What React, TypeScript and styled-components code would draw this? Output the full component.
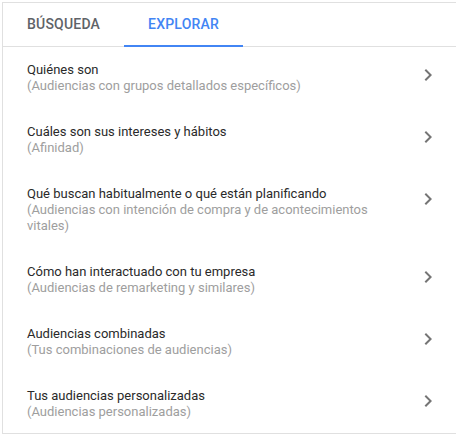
import React from 'react';
import styled, { createGlobalStyle } from 'styled-components';

const GlobalStyle = createGlobalStyle`
  html, body {
    margin: 0;
    padding: 0;
    background: #fff;
    overflow: hidden;
  }
  body {
    font-family: Roboto, 'Liberation Sans', Arial, sans-serif;
  }
`;

const Panel = styled.div`
  margin: 2px 0 0 2px;
  width: 454px;
  box-sizing: border-box;
  border: 1px solid #e0e0e0;
  border-right: none;
  background: #fff;
`;

const TabBar = styled.div`
  display: flex;
  border-bottom: 1px solid #e0e0e0;
`;

const Tab = styled.div<{ $active?: boolean }>`
  height: 42px;
  padding: 0 24px;
  margin-bottom: -1px;
  display: flex;
  align-items: center;
  font-size: 14px;
  font-weight: 500;
  letter-spacing: 0.2px;
  text-transform: uppercase;
  color: ${p => (p.$active ? '#4285f4' : '#5f6368')};
  border-bottom: 2px solid ${p => (p.$active ? '#4285f4' : 'transparent')};
`;

const List = styled.div`
  display: flex;
  flex-direction: column;
`;

const Row = styled.div`
  display: grid;
  grid-template-columns: 372px 24px;
  column-gap: 17px;
  padding: 15px 0 15px 24px;
  cursor: pointer;

  &:last-child {
    padding-bottom: 13px;
  }
`;

const Texts = styled.div`
  display: flex;
  flex-direction: column;
  font-size: 13px;
  line-height: 16px;
`;

const Title = styled.span`
  color: #2a2a2a;
`;

const Subtitle = styled.span`
  color: #9e9e9e;
`;

const Chevron = styled.svg`
  width: 24px;
  height: 24px;
  margin-top: 1px;
  fill: #757575;
`;

const items = [
  { title: 'Quiénes son', sub: '(Audiencias con grupos detallados específicos)' },
  { title: 'Cuáles son sus intereses y hábitos', sub: '(Afinidad)' },
  {
    title: 'Qué buscan habitualmente o qué están planificando',
    sub: '(Audiencias con intención de compra y de acontecimientos vitales)',
  },
  { title: 'Cómo han interactuado con tu empresa', sub: '(Audiencias de remarketing y similares)' },
  { title: 'Audiencias combinadas', sub: '(Tus combinaciones de audiencias)' },
  { title: 'Tus audiencias personalizadas', sub: '(Audiencias personalizadas)' },
];

const App: React.FC = () => (
  <>
    <GlobalStyle />
    <Panel>
      <TabBar>
        <Tab>Búsqueda</Tab>
        <Tab $active>Explorar</Tab>
      </TabBar>
      <List>
        {items.map(item => (
          <Row key={item.title}>
            <Texts>
              <Title>{item.title}</Title>
              <Subtitle>{item.sub}</Subtitle>
            </Texts>
            <Chevron viewBox='0 0 24 24'>
              <path d='M10 6L8.59 7.41 13.17 12l-4.58 4.59L10 18l6-6z' />
            </Chevron>
          </Row>
        ))}
      </List>
    </Panel>
  </>
);

export default App;
